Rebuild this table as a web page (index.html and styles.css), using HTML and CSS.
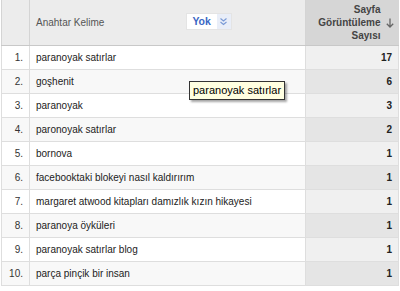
FILE: index.html
```html
<!DOCTYPE html>
<html>
<head>
<meta charset="utf-8">
<link rel="stylesheet" href="styles.css">
</head>
<body>
<div class="wrap">
<table class="grid">
  <thead>
    <tr>
      <th class="idx"></th>
      <th class="kw">
        <div class="kwhead">
          <span>Anahtar Kelime</span>
          <span class="sel"><span class="selval">Yok</span><span class="selbtn"><svg width="9" height="9" viewBox="0 0 9 9"><path d="M1.5 1.5 L4.5 4 L7.5 1.5 M1.5 5 L4.5 7.5 L7.5 5" fill="none" stroke="#7a9ad6" stroke-width="1.1"/></svg></span></span>
        </div>
      </th>
      <th class="num">
        <div class="numhead">
          <span class="numtitle">Sayfa<br>Görüntüleme<br>Sayısı</span>
          <svg class="arrow" width="8" height="10" viewBox="0 0 8 10"><path d="M4 0.5 V9 M0.8 5.8 L4 9 L7.2 5.8" fill="none" stroke="#666" stroke-width="1.3"/></svg>
        </div>
      </th>
    </tr>
  </thead>
  <tbody>
    <tr><td class="idx">1.</td><td class="kw">paranoyak satırlar</td><td class="num">17</td></tr>
    <tr class="alt"><td class="idx">2.</td><td class="kw">goşhenit</td><td class="num">6</td></tr>
    <tr><td class="idx">3.</td><td class="kw">paranoyak</td><td class="num">3</td></tr>
    <tr class="alt"><td class="idx">4.</td><td class="kw">paronoyak satırlar</td><td class="num">2</td></tr>
    <tr><td class="idx">5.</td><td class="kw">bornova</td><td class="num">1</td></tr>
    <tr class="alt"><td class="idx">6.</td><td class="kw">facebooktaki blokeyi nasıl kaldırırım</td><td class="num">1</td></tr>
    <tr><td class="idx">7.</td><td class="kw">margaret atwood kitapları damızlık kızın hikayesi</td><td class="num">1</td></tr>
    <tr class="alt"><td class="idx">8.</td><td class="kw">paranoya öyküleri</td><td class="num">1</td></tr>
    <tr><td class="idx">9.</td><td class="kw">paranoyak satırlar blog</td><td class="num">1</td></tr>
    <tr class="alt"><td class="idx">10.</td><td class="kw">parça pinçik bir insan</td><td class="num">1</td></tr>
  </tbody>
</table>
<div class="tooltip">paranoyak satırlar</div>
</div>
</body>
</html>
```
FILE: styles.css
```css
html, body {
  margin: 0;
  padding: 0;
  background: #fff;
}
.wrap {
  position: relative;
  width: 400px;
  height: 291px;
  overflow: hidden;
}
.grid {
  border-collapse: collapse;
  table-layout: fixed;
  width: 398px;
  margin-left: 1px;
  font-family: "Liberation Sans", Arial, sans-serif;
  font-size: 10px;
  color: #222;
}
.grid thead tr {
  height: 45px;
}
.grid tbody tr {
  height: 24px;
}
.grid th {
  padding: 0;
  background: #ececec;
  border-bottom: 1px solid #c8c8c8;
  border-left: 1px solid #d4d4d4;
  font-weight: normal;
  vertical-align: middle;
}
.grid td {
  padding: 0;
  border-bottom: 1px solid #dedede;
  border-left: 1px solid #dedede;
  vertical-align: middle;
  background: #fff;
}
.grid tr.alt td {
  background: #f8f8f8;
}
.grid td.num {
  background: #f0f0f0;
  border-right: 1px solid #dedede;
}
.grid tr.alt td.num {
  background: #e5e5e5;
}
.grid .idx {
  width: 27px;
}
.grid .num {
  width: 93px;
}
td.idx {
  text-align: right;
  padding-right: 6px;
  color: #333;
}
td.kw {
  padding-left: 6px;
}
td.num {
  text-align: right;
  padding-right: 6px;
  font-weight: bold;
  color: #222;
}
th.num {
  background: #d6d6d6;
}
.kwhead {
  display: flex;
  align-items: center;
  padding-left: 6px;
  color: #555;
  gap: 82px;
}
.sel {
  display: flex;
  height: 15px;
  border: 1px solid #e4e4e4;
  background: #fff;
  margin-top: -1px;
}
.selval {
  padding: 0 6px 0 5px;
  font-weight: bold;
  color: #3b67c4;
  font-size: 10.5px;
  line-height: 15px;
}
.selbtn {
  display: flex;
  align-items: center;
  justify-content: center;
  width: 14px;
  background: #e9eef8;
}
.numhead {
  display: flex;
  align-items: center;
  justify-content: flex-end;
  padding-right: 5px;
  gap: 5px;
}
.numtitle {
  text-align: right;
  font-weight: bold;
  color: #444;
  line-height: 13px;
}
.arrow {
  display: block;
  margin-top: 1px;
}
.tooltip {
  position: absolute;
  left: 189px;
  top: 81px;
  height: 17px;
  padding: 0 3px;
  line-height: 17px;
  font-family: "Liberation Sans", Arial, sans-serif;
  font-size: 11px;
  color: #000;
  background: #ffffe1;
  border: 1px solid #333;
  box-shadow: 2px 2px 2px rgba(0,0,0,0.35);
}
```
